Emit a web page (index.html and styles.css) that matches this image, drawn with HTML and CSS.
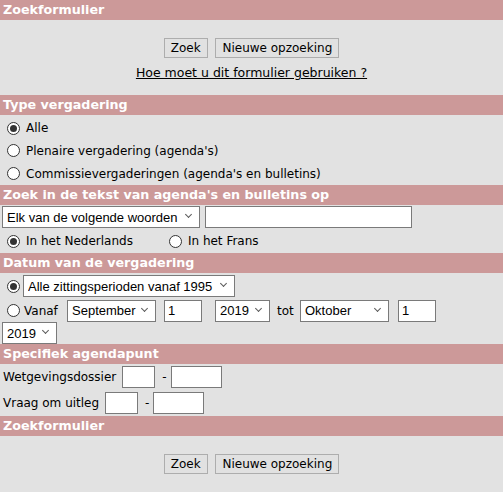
FILE: index.html
```html
<!DOCTYPE html>
<html lang="nl">
<head>
    <meta charset="UTF-8">
    <title>Zoekformulier</title>
    <link rel="stylesheet" href="styles.css">
</head>
<body>
    <form class="zoekform">
        <div class="kop">Zoekformulier</div>
        <div class="knoppen">
            <button type="button">Zoek</button>
            <button type="button">Nieuwe opzoeking</button>
        </div>
        <div class="hulp"><a href="#">Hoe moet u dit formulier gebruiken ?</a></div>

        <div class="kop">Type vergadering</div>
        <div class="rij rij-eerste"><input type="radio" name="type" checked> Alle</div>
        <div class="rij"><input type="radio" name="type"> Plenaire vergadering (agenda's)</div>
        <div class="rij"><input type="radio" name="type"> Commissievergaderingen (agenda's en bulletins)</div>

        <div class="kop">Zoek in de tekst van agenda's en bulletins op</div>
        <div class="rij rij-veld">
            <span class="keuze"><select class="sel-woorden"><option>Elk van de volgende woorden</option></select></span>
            <input type="text" class="tekst-lang">
        </div>
        <div class="rij rij-hoog">
            <input type="radio" name="taal" checked> In het Nederlands
            <span class="taal-fr"><input type="radio" name="taal"> In het Frans</span>
        </div>

        <div class="kop">Datum van de vergadering</div>
        <div class="rij rij-periode">
            <input type="radio" name="datum" checked>
            <span class="keuze"><select class="sel-periode"><option>Alle zittingsperioden vanaf 1995</option></select></span>
        </div>
        <div class="rij rij-datum">
            <input type="radio" name="datum">
            <span class="lbl-vanaf">Vanaf</span>
            <span class="keuze"><select class="sel-maand"><option>September</option></select></span>
            <input type="text" class="tekst-dag" value="1">
            <span class="keuze keuze-jaar"><select class="sel-jaar"><option>2019</option></select></span>
            <span class="lbl-tot">tot</span>
            <span class="keuze"><select class="sel-maand"><option>Oktober</option></select></span>
            <input type="text" class="tekst-dag tekst-dag-tot" value="1">
        </div>
        <div class="rij rij-jaar">
            <span class="keuze"><select class="sel-jaar"><option>2019</option></select></span>
        </div>

        <div class="kop">Specifiek agendapunt</div>
        <div class="rij rij-punt">
            <span class="lbl-punt">Wetgevingsdossier</span>
            <input type="text" class="tekst-kort">
            <span class="streep">-</span>
            <input type="text" class="tekst-mid">
        </div>
        <div class="rij rij-punt">
            <span class="lbl-punt">Vraag om uitleg</span>
            <input type="text" class="tekst-kort">
            <span class="streep">-</span>
            <input type="text" class="tekst-mid">
        </div>

        <div class="kop">Zoekformulier</div>
        <div class="knoppen">
            <button type="button">Zoek</button>
            <button type="button">Nieuwe opzoeking</button>
        </div>
    </form>
</body>
</html>
```

FILE: styles.css
```css
body {
    margin: 0;
    background-color: rgb(226, 226, 226);
    font-family: 'DejaVu Sans', Verdana, sans-serif;
    font-size: 12px;
    color: rgb(0, 0, 0);
}
.zoekform {
    margin: 0;
}
.kop {
    background-color: rgb(204, 153, 153);
    color: white;
    font-weight: bold;
    font-size: 12.7px;
    height: 20px;
    line-height: 20px;
    padding-left: 3px;
    white-space: nowrap;
}
.knoppen {
    text-align: center;
    padding-top: 18px;
}
.knoppen button {
    font-family: inherit;
    font-size: 12px;
    background-color: rgb(225, 225, 225);
    border: 1px solid rgb(173, 173, 173);
    border-radius: 0;
    height: 20px;
    padding: 0 6px;
    margin: 0 2px;
    color: black;
}
.hulp {
    text-align: center;
    padding: 6px 0 13px;
    line-height: 18px;
    font-size: 12.5px;
}
.hulp a {
    color: black;
}
.rij {
    padding-left: 7px;
    height: 23px;
    display: flex;
    align-items: center;
    gap: 6px;
    white-space: nowrap;
}
.rij-eerste {
    height: 24px;
    padding-top: 2px;
    box-sizing: border-box;
}
.rij-hoog {
    height: 24px;
}
.rij-veld {
    height: 24px;
    padding-left: 2px;
    gap: 5px;
}
.rij-periode {
    height: 26px;
    gap: 0;
}
.rij-datum {
    height: 23px;
    gap: 0;
}
.rij-jaar {
    height: 22px;
    padding-left: 2px;
    align-items: flex-start;
}
.rij-punt {
    padding-left: 3px;
    height: 26px;
    gap: 0;
}
input[type="radio"] {
    appearance: none;
    width: 13px;
    height: 13px;
    margin: 0;
    border: 1px solid rgb(51, 51, 51);
    border-radius: 50%;
    background-color: white;
    display: grid;
    place-content: center;
    flex: none;
}
input[type="radio"]:checked::before {
    content: "";
    width: 7px;
    height: 7px;
    border-radius: 50%;
    background-color: rgb(51, 51, 51);
}
.taal-fr {
    display: flex;
    align-items: center;
    gap: 6px;
    margin-left: 30px;
}
.rij-periode .keuze {
    margin-left: 3px;
}
.lbl-vanaf {
    width: 39px;
    margin: 0 4px;
}
.lbl-tot {
    width: 19px;
    margin: 0 4px 0 7px;
}
.keuze {
    position: relative;
    display: inline-block;
    flex: none;
}
.keuze::after {
    content: "";
    position: absolute;
    right: 9px;
    top: 6px;
    width: 4px;
    height: 4px;
    border-right: 1px solid rgb(90, 90, 90);
    border-bottom: 1px solid rgb(90, 90, 90);
    transform: rotate(45deg);
    pointer-events: none;
}
.keuze-jaar {
    margin-left: 13px;
}
select {
    appearance: none;
    font-family: 'Liberation Sans', Arial, sans-serif;
    font-size: 13px;
    height: 22px;
    display: block;
    border: 1px solid rgb(122, 122, 122);
    border-radius: 0;
    background-color: white;
    padding: 0 18px 0 4px;
    color: black;
}
.sel-woorden { width: 198px; }
.sel-periode { width: 212px; }
.sel-maand { width: 89px; }
.sel-jaar { width: 55px; }
input[type="text"] {
    font-family: 'Liberation Sans', Arial, sans-serif;
    font-size: 13px;
    height: 22px;
    box-sizing: border-box;
    border: 1px solid rgb(122, 122, 122);
    background-color: white;
    padding: 0 3px;
    flex: none;
}
.tekst-lang { width: 207px; }
.tekst-dag { width: 38px; margin-left: 8px; }
.tekst-dag-tot { margin-left: 9px; }
.tekst-kort { width: 33px; margin-left: 6px; }
.tekst-mid { width: 51px; }
.streep {
    margin: 0 4px 0 7px;
}
```
